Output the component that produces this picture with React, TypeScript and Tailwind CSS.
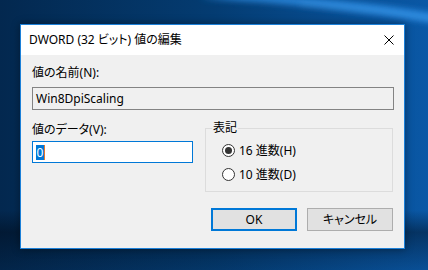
import React from "react";

function Radio({ checked, label }: { checked: boolean; label: string }) {
  return (
    <div className="flex items-center gap-[4px] h-[13px]">
      <div className="w-[13px] h-[13px] rounded-full border border-[#333333] bg-white flex items-center justify-center shrink-0">
        {checked && <div className="w-[7px] h-[7px] rounded-full bg-[#333333]" />}
      </div>
      <span className="text-[12px] leading-[16px] text-black">{label}</span>
    </div>
  );
}

export default function App() {
  return (
    <div className="relative w-[428px] h-[270px] overflow-hidden bg-[#043366] font-['Noto_Sans','Noto_Sans_CJK_JP',sans-serif] [font-feature-settings:'palt']">
      <svg className="absolute inset-0" width="428" height="270" viewBox="0 0 428 270">
        <defs>
          <linearGradient id="base" x1="0" y1="0" x2="1" y2="0">
            <stop offset="0" stopColor="#03284f" />
            <stop offset="0.5" stopColor="#043c72" />
            <stop offset="1" stopColor="#0a58a6" />
          </linearGradient>
          <linearGradient id="bot" x1="0" y1="0" x2="0" y2="1">
            <stop offset="0" stopColor="#000814" stopOpacity="0" />
            <stop offset="0.78" stopColor="#000814" stopOpacity="0" />
            <stop offset="0.86" stopColor="#000814" stopOpacity="0.45" />
            <stop offset="1" stopColor="#000814" stopOpacity="0.1" />
          </linearGradient>
          <filter id="blur" x="-20%" y="-200%" width="140%" height="500%">
            <feGaussianBlur stdDeviation="3" />
          </filter>
        </defs>
        <rect width="428" height="270" fill="url(#base)" />
        <rect width="428" height="270" fill="url(#bot)" />
        <path d="M200,-2 Q320,4 440,24 L440,14 Q330,-4 240,-6 Z" fill="#2f8fe6" opacity="0.85" filter="url(#blur)" />
        <path d="M300,4 Q380,10 440,20" stroke="#5aaef0" strokeWidth="1.5" fill="none" opacity="0.6" filter="url(#blur)" />
      </svg>
      <div className="relative pl-[20px] pt-[24px]">
        <div className="w-[385px] h-[225px] border border-[#1c80d8] flex flex-col bg-[#f0f0f0] shadow-[0_0_8px_rgba(0,0,0,0.4)]">
          <div className="h-[30px] bg-white flex items-center justify-between pl-[8px] pr-[10px] shrink-0">
            <span className="text-[12px] leading-[16px] text-black">DWORD (32 ビット) 値の編集</span>
            <svg width="10" height="10" viewBox="0 0 10 10">
              <path d="M0.5,0.5 L9.5,9.5 M9.5,0.5 L0.5,9.5" stroke="#000" strokeWidth="1" fill="none" />
            </svg>
          </div>
          <div className="flex-1 flex flex-col pl-[11px] pr-[10px] pt-[10px]">
            <div className="text-[12px] leading-[16px] text-black">値の名前(N):</div>
            <div className="mt-[6px] h-[23px] border border-[#838383] bg-[#f0f0f0] flex items-center pl-[3px] text-[12px] leading-[16px] text-black">
              Win8DpiScaling
            </div>
            <div className="mt-[12px] flex gap-[12px]">
              <div className="w-[161px] flex flex-col">
                <div className="text-[12px] leading-[16px] text-black">値のデータ(V):</div>
                <div className="mt-[3px] h-[22px] border border-[#0078d7] bg-white flex items-center pl-[3px]">
                  <span className="bg-[#0078d7] text-white text-[12px] leading-[15px] px-[0.5px]">0</span>
                  <span className="w-[1px] h-[15px] bg-[#e8762b]" />
                </div>
              </div>
              <div className="w-[188px] pt-[6px]">
                <div className="relative h-[64px] border border-[#dcdcdc] flex flex-col gap-[11px] pl-[16px] pt-[15px]">
                  <span className="absolute -top-[9px] left-[6px] px-[1px] bg-[#f0f0f0] text-[12px] leading-[16px] text-black">表記</span>
                  <Radio checked label="16 進数(H)" />
                  <Radio checked={false} label="10 進数(D)" />
                </div>
              </div>
            </div>
            <div className="mt-[16px] flex justify-end gap-[10px] pr-[1px]">
              <button className="w-[86px] h-[23px] border-2 border-[#0078d7] bg-[#e1e1e1] text-[12px] leading-[16px] text-black flex items-center justify-center">
                OK
              </button>
              <button className="w-[86px] h-[23px] border border-[#adadad] bg-[#e1e1e1] text-[12px] leading-[16px] text-black flex items-center justify-center">
                キャンセル
              </button>
            </div>
          </div>
        </div>
      </div>
    </div>
  );
}
